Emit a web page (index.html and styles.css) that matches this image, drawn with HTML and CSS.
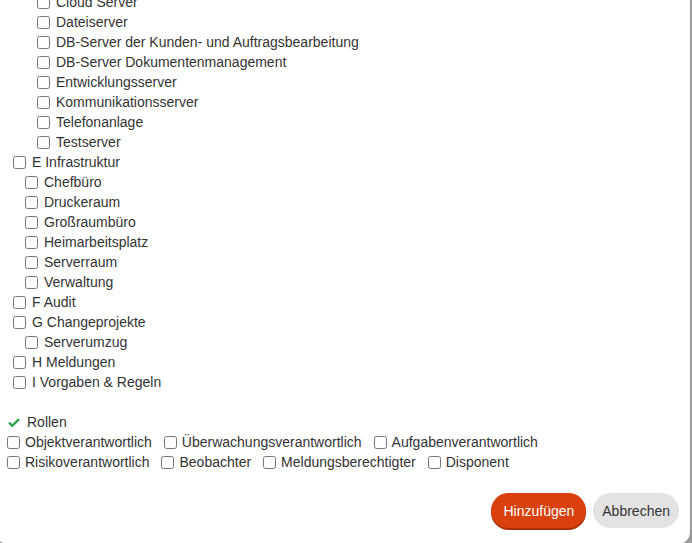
FILE: index.html
```html
<!DOCTYPE html>
<html lang="de">
<head>
<meta charset="utf-8">
<title>Dialog</title>
<link rel="stylesheet" href="styles.css">
</head>
<body>
<div class="dialog">
  <div class="scroll">
    <ul class="tree">
      <li class="row l3"><input type="checkbox"><span>Cloud Server</span></li>
      <li class="row l3"><input type="checkbox"><span>Dateiserver</span></li>
      <li class="row l3"><input type="checkbox"><span>DB-Server der Kunden- und Auftragsbearbeitung</span></li>
      <li class="row l3"><input type="checkbox"><span>DB-Server Dokumentenmanagement</span></li>
      <li class="row l3"><input type="checkbox"><span>Entwicklungsserver</span></li>
      <li class="row l3"><input type="checkbox"><span>Kommunikationsserver</span></li>
      <li class="row l3"><input type="checkbox"><span>Telefonanlage</span></li>
      <li class="row l3"><input type="checkbox"><span>Testserver</span></li>
      <li class="row l1"><input type="checkbox"><span>E Infrastruktur</span></li>
      <li class="row l2"><input type="checkbox"><span>Chefbüro</span></li>
      <li class="row l2"><input type="checkbox"><span>Druckeraum</span></li>
      <li class="row l2"><input type="checkbox"><span>Großraumbüro</span></li>
      <li class="row l2"><input type="checkbox"><span>Heimarbeitsplatz</span></li>
      <li class="row l2"><input type="checkbox"><span>Serverraum</span></li>
      <li class="row l2"><input type="checkbox"><span>Verwaltung</span></li>
      <li class="row l1"><input type="checkbox"><span>F Audit</span></li>
      <li class="row l1"><input type="checkbox"><span>G Changeprojekte</span></li>
      <li class="row l2"><input type="checkbox"><span>Serverumzug</span></li>
      <li class="row l1"><input type="checkbox"><span>H Meldungen</span></li>
      <li class="row l1"><input type="checkbox"><span>I Vorgaben &amp; Regeln</span></li>
    </ul>

    <div class="roles">
      <div class="roles-head">
        <svg class="check" width="12" height="9" viewBox="0 0 12 9"><path d="M1 4.6 L4.3 7.8 L11 1.2" fill="none" stroke="#2ea44f" stroke-width="2.4" stroke-linejoin="miter"/></svg>
        <span>Rollen</span>
      </div>
      <div class="roles-line">
        <label class="role"><input type="checkbox"><span>Objektverantwortlich</span></label>
        <label class="role"><input type="checkbox"><span>Überwachungsverantwortlich</span></label>
        <label class="role"><input type="checkbox"><span>Aufgabenverantwortlich</span></label>
      </div>
      <div class="roles-line">
        <label class="role"><input type="checkbox"><span>Risikoverantwortlich</span></label>
        <label class="role"><input type="checkbox"><span>Beobachter</span></label>
        <label class="role"><input type="checkbox"><span>Meldungsberechtigter</span></label>
        <label class="role"><input type="checkbox"><span>Disponent</span></label>
      </div>
    </div>
  </div>
  <div class="actions">
    <button class="btn primary">Hinzufügen</button>
    <button class="btn secondary">Abbrechen</button>
  </div>
</div>
</body>
</html>
```
FILE: styles.css
```css
html, body {
  margin: 0;
  padding: 0;
  height: 543px;
  overflow: hidden;
  background: #9a9a9a;
}
body {
  font-family: "Liberation Sans", Arial, sans-serif;
  font-size: 14px;
  color: #333;
}
.dialog {
  margin-left: -4px;
  width: 694px;
  height: 544px;
  background: #fff;
  border-radius: 0 0 12px 12px;
  display: flex;
  flex-direction: column;
  overflow: hidden;
}
.scroll {
  padding-left: 4px;
  flex: 1;
}
.tree {
  list-style: none;
  margin: -8px 0 0 0;
  padding: 0;
}
.row {
  height: 20px;
  display: flex;
  align-items: center;
}
.row input, .role input {
  width: 13px;
  height: 13px;
  margin: 0 6px 0 0;
  flex: none;
}
.l1 { padding-left: 13px; }
.l2 { padding-left: 25px; }
.l3 { padding-left: 37px; }
.row span { white-space: nowrap; }

.roles {
  margin-top: 20px;
}
.roles-head {
  height: 20px;
  display: flex;
  align-items: center;
  padding-left: 8px;
}
.check {
  margin-right: 7px;
}
.roles-line {
  height: 20px;
  display: flex;
  align-items: center;
  padding-left: 7px;
  gap: 12px;
}
.role {
  display: flex;
  align-items: center;
  white-space: nowrap;
}
.role input {
  margin-right: 5px;
}

.actions {
  display: flex;
  justify-content: flex-end;
  gap: 7px;
  padding: 0 11px 15px 0;
}
.btn {
  font-family: "Liberation Sans", Arial, sans-serif;
  font-size: 14px;
  height: 35px;
  border: none;
  border-radius: 18px;
  cursor: pointer;
}
.primary {
  background: #d9400c;
  color: #fff;
  padding: 0 12px;
  box-shadow: 0 2px 0 #a83209;
  margin-bottom: 1px;
}
.secondary {
  background: #e3e3e3;
  color: #333;
  padding: 0 9px;
}
```
